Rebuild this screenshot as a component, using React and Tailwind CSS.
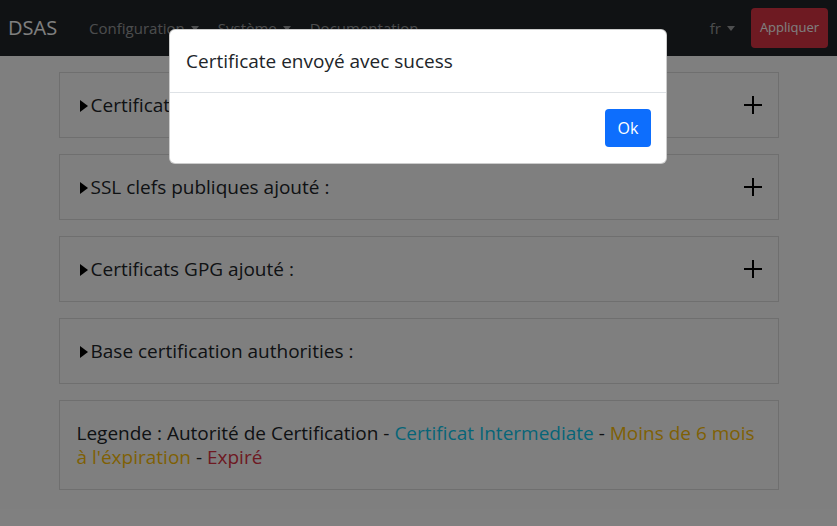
import React from "react";

function Caret() {
  return (
    <svg width="8" height="5" viewBox="0 0 8 5" className="ml-[6px] inline-block">
      <polygon points="0,0 8,0 4,5" fill="currentColor" />
    </svg>
  );
}

function Tri() {
  return (
    <svg width="8" height="12" viewBox="0 0 8 12" className="mr-[3px] mt-[2px] shrink-0">
      <polygon points="0,0 8,6 0,12" fill="#000" />
    </svg>
  );
}

function Plus() {
  return (
    <svg width="18" height="18" viewBox="0 0 18 18" className="shrink-0">
      <line x1="9" y1="0" x2="9" y2="18" stroke="#000" strokeWidth="2" />
      <line x1="0" y1="9" x2="18" y2="9" stroke="#000" strokeWidth="2" />
    </svg>
  );
}

function Section({ title, plus }) {
  return (
    <div className="border border-[#dfdfdf] bg-white px-[20px] py-[20px] flex items-center justify-between">
      <div className="flex items-center text-[19px] leading-[24px] text-[#212529]">
        <Tri />
        <span>{title}</span>
      </div>
      {plus && <div className="mr-[-4px]"><Plus /></div>}
    </div>
  );
}

export default function App() {
  return (
    <div
      className="relative w-[837px] h-[526px] overflow-hidden bg-white"
      style={{ fontFamily: '"Open Sans", "Noto Sans", sans-serif' }}
    >
      <nav className="h-[56px] bg-[#212529] flex items-center pl-[8px] pr-[9px]">
        <span className="text-white text-[20px] leading-[30px] mr-[32px]">DSAS</span>
        <div className="flex items-center text-[15px] text-[rgba(255,255,255,0.55)] gap-[19px]">
          <span className="flex items-center">Configuration<Caret /></span>
          <span className="flex items-center">Système<Caret /></span>
          <span>Documentation</span>
        </div>
        <div className="ml-auto flex items-center gap-[16px]">
          <span className="flex items-center text-[15px] text-[rgba(255,255,255,0.55)]">fr<Caret /></span>
          <button className="h-[40px] w-[77px] rounded-[4px] bg-[#dc3545] text-white text-[13px]">Appliquer</button>
        </div>
      </nav>

      <div className="w-[720px] mx-auto mt-[16px] flex flex-col gap-[16px]">
        <Section title="Certificats X509 ajouté :" plus />
        <Section title="SSL clefs publiques ajouté :" plus />
        <Section title="Certificats GPG ajouté :" plus />
        <Section title="Base certification authorities :" />
        <div className="border border-[#dfdfdf] bg-white px-[17px] py-[20px] text-[19px] leading-[24px] text-[#212529]">
          Legende : Autorité de Certification - <span className="text-[#0dcaf0]">Certificat Intermediate</span> -{" "}
          <span className="text-[#ffc107]">Moins de 6 mois à l'éxpiration</span> -{" "}
          <span className="text-[#dc3545]">Expiré</span>
        </div>
      </div>

      <div className="absolute inset-0 bg-black/50" />

      <div className="absolute left-[169px] top-[29px] w-[498px] bg-white rounded-[6px] border border-black/20">
        <div className="px-[16px] pt-[16px] pb-[16px] border-b border-[#dee2e6]">
          <h5 className="text-[19px] leading-[30px] text-[#212529]">Certificate envoyé avec sucess</h5>
        </div>
        <div className="flex justify-end px-[15px] py-[16px]">
          <button className="h-[38px] w-[46px] rounded-[4px] bg-[#0d6efd] text-white text-[16px]">Ok</button>
        </div>
      </div>
    </div>
  );
}
